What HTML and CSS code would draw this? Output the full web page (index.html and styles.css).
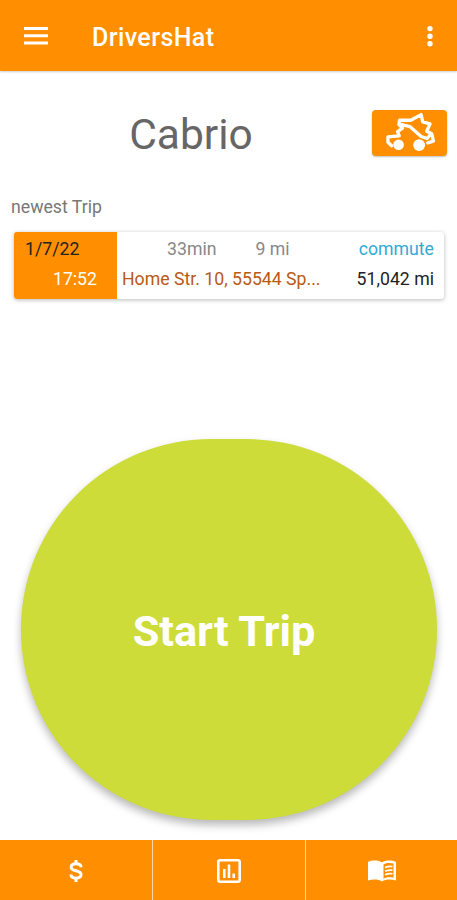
FILE: index.html
```html
<!DOCTYPE html>
<html lang="en">
<head>
  <meta charset="UTF-8" />
  <meta name="viewport" content="width=device-width, initial-scale=1" />
  <title>DriversHat</title>
  <link rel="stylesheet" href="styles.css">
</head>
<body>
  <header class="app-bar">
    <svg class="menu-icon" viewBox="0 0 24 18" aria-label="Menu">
      <path d="M0 0h24v3H0zM0 7.2h24v3H0zM0 14.4h24v3H0z" />
    </svg>
    <h1>DriversHat</h1>
    <svg class="more-icon" viewBox="0 0 8 24" aria-label="More">
      <circle cx="4" cy="4.6" r="2.7" />
      <circle cx="4" cy="12.2" r="2.7" />
      <circle cx="4" cy="19.8" r="2.7" />
    </svg>
  </header>

  <main>
    <div class="vehicle">
      <h2>Cabrio</h2>
      <button class="car-button" aria-label="Change car">
        <svg viewBox="36 30 226 137">
          <path d="M95 137L84 126L84 110L118 107L113 94L128 84L117 73L119 60L153 60L184 43L189 65L211 71L201 93L216 101L221 123L204 128M120 72L150 79L184 109L202 115L212 103" />
          <circle cx="116" cy="134" r="16" />
          <circle cx="178" cy="135" r="18" />
        </svg>
      </button>
    </div>

    <p class="section-label">newest Trip</p>

    <!-- Latest trip -->
    <div class="trip-card">
      <div class="trip-date">
        <span class="day">1/7/22</span>
        <span class="time">17:52</span>
      </div>
      <div class="trip-info">
        <div class="trip-row">
          <span class="duration">33min</span>
          <span class="distance">9 mi</span>
          <span class="type">commute</span>
        </div>
        <div class="trip-row">
          <span class="address">Home Str. 10, 55544 Sp...</span>
          <span class="odometer">51,042 mi</span>
        </div>
      </div>
    </div>

    <button class="start-button">Start Trip</button>
  </main>

  <nav class="bottom-nav">
    <a class="nav-item" aria-label="Costs">
      <svg class="dollar-icon" viewBox="0 0 14 24">
        <path d="M12 8.2C12 5.8 9.8 4.8 7 4.8S2.2 6 2.2 8.2C2.2 13 12 10.600 12 15.600C12 18 9.800 19.200 7 19.200S2 18 2 15.600M7 1v4M7 19v4" />
      </svg>
    </a>
    <a class="nav-item" aria-label="Statistics">
      <svg class="chart-icon" viewBox="0 0 24 24">
        <rect x="1.300" y="1.300" width="21.400" height="21.400" rx="2" />
        <path d="M7.300 10v9M12 5.500v13.500M16.700 14.500v4.500" />
      </svg>
    </a>
    <a class="nav-item" aria-label="Logbook">
      <svg class="book-icon" viewBox="0 0 28 22">
        <path class="page" d="M14 2.500C10.500 0 4.500 0 0 2V20.500C4.500 19 10.500 19 14 21.500C17.500 19 23.500 19 28 20.500V2C23.500 0 17.500 0 14 2.500z" />
        <path class="inner" d="M15.500 4.500C18.500 2.700 22 2.700 25.500 3.500V17.700C22 17 18.500 17 15.500 18.700z" />
        <path class="lines" d="M17 7.600Q20.500 6 24.500 6.600M17 11.200Q20.500 9.600 24.500 10.200M17 14.800Q20.500 13.200 24.500 13.800" />
      </svg>
    </a>
  </nav>
</body>
</html>
```
FILE: styles.css
```css
* {
  box-sizing: border-box;
}

body {
  margin: 0;
  height: 900px;
  display: flex;
  flex-direction: column;
  font-family: Roboto, sans-serif;
  background: #fff;
  color: #222;
}

h1, h2, p {
  margin: 0;
}

button {
  border: none;
  padding: 0;
  font-family: inherit;
}

svg {
  display: block;
  fill: #fff;
}

.app-bar {
  height: 71px;
  flex: none;
  display: flex;
  align-items: center;
  padding: 0 23px 0 24px;
  background: #ff8f00;
  box-shadow: 0 1px 2px rgba(0, 0, 0, 0.2);
}

.menu-icon {
  width: 24px;
  height: 18px;
}

.app-bar h1 {
  flex: 1;
  margin-left: 44px;
  padding-top: 4px;
  color: #fff;
  font-size: 25px;
  font-weight: 500;
  line-height: 30px;
  letter-spacing: 0.4px;
}

.more-icon {
  width: 8px;
  height: 24px;
}

main {
  flex: 1;
  display: flex;
  flex-direction: column;
}

.vehicle {
  height: 125px;
  display: grid;
  grid-template-columns: 1fr 75px;
  align-items: center;
  padding: 0 10px 1px 10px;
}

.vehicle h2 {
  padding-top: 4px;
  text-align: center;
  color: #666;
  font-size: 42.5px;
  font-weight: 400;
  line-height: 50px;
}

.car-button {
  width: 75px;
  height: 46px;
  border-radius: 4px;
  background: #ff8f00;
  box-shadow: 0 1px 2px rgba(0, 0, 0, 0.25);
}

.car-button svg {
  width: 75px;
  height: 46px;
}

.car-button path {
  fill: none;
  stroke: #fff;
  stroke-width: 10;
  stroke-linejoin: round;
  stroke-linecap: round;
}

.section-label {
  padding-left: 11px;
  color: #777;
  font-size: 17.7px;
  line-height: 22px;
}

.trip-card {
  height: 67px;
  margin: 14px 13px 0 14px;
  display: flex;
  border-radius: 3px;
  overflow: hidden;
  box-shadow: 0 1px 4px rgba(0, 0, 0, 0.28);
  font-size: 17.7px;
  line-height: 29.5px;
}

.trip-date {
  width: 103px;
  display: flex;
  flex-direction: column;
  padding: 3px 20px 0 11px;
  background: #ff8f00;
}

.trip-date .time {
  align-self: flex-end;
  color: #fff;
}

.trip-info {
  flex: 1;
  padding: 3px 10px 0 5px;
}

.trip-row {
  display: flex;
  white-space: nowrap;
}

.duration {
  margin-left: 45px;
  color: #888;
}

.distance {
  margin-left: 39px;
  color: #888;
}

.type {
  margin-left: auto;
  color: #33aad3;
}

.address {
  color: #b85a14;
}

.odometer {
  margin-left: auto;
}

.start-button {
  width: 416px;
  height: 381px;
  margin: 140px 0 0 21px;
  padding: 4px 10px 0 0;
  border-radius: 190px;
  background: #cddc39;
  box-shadow: 0 5px 8px rgba(0, 0, 0, 0.28);
  color: #fff;
  font-size: 43.3px;
  font-weight: 700;
}

.bottom-nav {
  height: 60px;
  flex: none;
  display: grid;
  grid-template-columns: 152px 152px 1fr;
  gap: 1px;
  background: #ffd9a8;
}

.nav-item {
  display: flex;
  align-items: center;
  justify-content: center;
  background: #ff8f00;
  padding-top: 1px;
}

.dollar-icon {
  width: 14px;
  height: 24px;
  fill: none;
  stroke: #fff;
  stroke-width: 3;
}

.chart-icon {
  width: 24px;
  height: 24px;
  fill: none;
  stroke: #fff;
  stroke-width: 2.6;
}

.book-icon {
  width: 28px;
  height: 22px;
}

.book-icon .inner {
  fill: #ff8f00;
}

.book-icon .lines {
  fill: none;
  stroke: #fff;
  stroke-width: 1.8;
}
```
